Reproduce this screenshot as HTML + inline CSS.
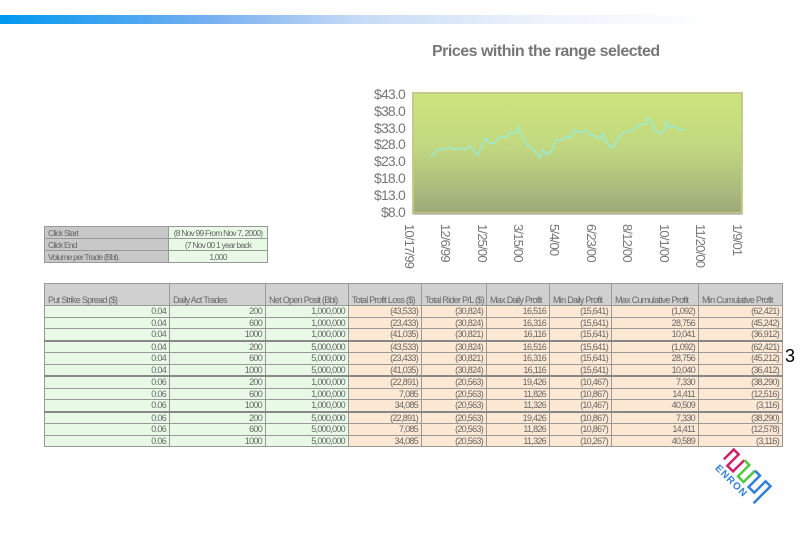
<!DOCTYPE html>
<html><head><meta charset="utf-8"><style>
body{margin:0;width:810px;height:540px;background:#fff;position:relative;overflow:hidden;font-family:"Liberation Sans",sans-serif;}
.bar{position:absolute;left:0;top:15px;width:720px;height:9px;background:linear-gradient(90deg,#0098f0,#7ab0f0 30%,#c6dcf6 50%,#eef3fb 75%,#fff);}
table{position:absolute;border-collapse:collapse;font-size:9px;color:#666;letter-spacing:-0.7px;table-layout:fixed;}
td{border:1px solid #999;padding:0 3px;height:10.5px;line-height:10px;white-space:nowrap;overflow:hidden;}
.g{background:#c8c8c8;}
.l{background:#e8fae6;text-align:right;}
.o{background:#fde8d4;text-align:right;}
.h td{background:#d0d0d0;height:21px;line-height:10px;vertical-align:bottom;text-align:left;}
.sep td{border-top:2px solid #888;}
.sm td{height:11px;}
</style></head><body>
<div class="bar"></div>
<div style="position:absolute;left:432px;top:43px;font-size:16px;font-weight:bold;color:#777;letter-spacing:-0.5px;width:240px;white-space:nowrap">Prices within the range selected</div>
<div style="position:absolute;left:360px;top:86px;width:45px;text-align:right;font-size:14px;color:#777;line-height:16.8px;letter-spacing:-0.8px">$43.0<br>$38.0<br>$33.0<br>$28.0<br>$23.0<br>$18.0<br>$13.0<br>$8.0</div>
<svg style="position:absolute;left:0;top:0" width="810" height="540">
<defs><linearGradient id="bg" x1="0" y1="0" x2="0" y2="1"><stop offset="0" stop-color="#cce47c"/><stop offset="0.45" stop-color="#c2d880"/><stop offset="1" stop-color="#9eaa7a"/></linearGradient></defs>
<rect x="413" y="93" width="329" height="120" fill="url(#bg)" stroke="#c8c88a" stroke-width="2"/>
<polyline fill="none" stroke="#8ff0e8" stroke-width="1.2" points="431,158 435,152 440,148 445,150 450,147 455,150 460,148 465,150 470,146 475,152 478,155 482,146 486,138 490,144 495,142 500,136 505,138 510,132 515,134 518,127 522,136 527,145 532,148 537,154 540,158 543,150 547,155 552,150 556,140 562,140 567,136 570,138 575,130 580,133 585,130 590,135 595,136 600,140 603,133 607,143 612,148 615,145 618,138 622,133 627,132 632,130 636,127 640,124 645,125 648,118 652,122 655,130 660,134 664,130 667,122 670,128 675,126 680,130 684,129"/>
<g stroke="#999" stroke-width="1"><line x1="413" y1="214" x2="742" y2="214"/></g>
<g font-size="13" fill="#777" font-family="Liberation Sans" letter-spacing="-0.8">
<text transform="translate(405,224) rotate(90)">10/17/99</text>
<text transform="translate(441,224) rotate(90)">12/6/99</text>
<text transform="translate(478,224) rotate(90)">1/25/00</text>
<text transform="translate(514,224) rotate(90)">3/15/00</text>
<text transform="translate(550,224) rotate(90)">5/4/00</text>
<text transform="translate(587,224) rotate(90)">6/23/00</text>
<text transform="translate(623,224) rotate(90)">8/12/00</text>
<text transform="translate(660,224) rotate(90)">10/1/00</text>
<text transform="translate(696,224) rotate(90)">11/20/00</text>
<text transform="translate(733,224) rotate(90)">1/9/01</text>
</g>
<g transform="translate(738,482) rotate(45)" fill="none" stroke-width="2.5">
<path d="M-26,-6 V-20 H-19 V-4 H-11 V-20" stroke="#d0206a"/>
<path d="M-11,-20 H-4 V-4 H4 V-20" stroke="#50c840"/>
<path d="M4,-20 H11 V-4 H19 V-20 H26 V4" stroke="#3080d8"/>
<text x="-26" y="7" fill="#3080d8" stroke="none" font-size="10" font-weight="bold" letter-spacing="1">ENRON</text>
</g>
</svg>
<div style="position:absolute;left:785px;top:346px;font-size:18px;color:#000">3</div>
<table class="sm" style="left:44px;top:226px;width:224px;font-size:8.5px;letter-spacing:-0.8px">
<tr><td class="g" style="width:117px">Click Start</td><td class="l" style="text-align:center;padding:0">(8 Nov 99 From Nov 7, 2000)</td></tr>
<tr><td class="g">Click End</td><td class="l" style="text-align:center">(7 Nov 00 1 year back</td></tr>
<tr><td class="g">Volume per Trade (Bbl).</td><td class="l" style="text-align:center">1,000</td></tr>
</table>
<table style="left:44px;top:283px;width:739px">
<tr class="h"><td style="width:118px">Put Strike Spread ($)</td><td style="width:89px">Daily Act Trades</td><td style="width:76px">Net Open Posit (Bbl)</td><td style="width:66px">Total Profit Loss ($)</td><td style="width:58px">Total Rider P/L ($)</td><td style="width:56px">Max Daily Profit</td><td style="width:55px">Min Daily Profit</td><td style="width:80px">Max Cumulative Profit</td><td>Min Cumulative Profit</td></tr>
<tr><td class="l">0.04</td><td class="l">200</td><td class="l">1,000,000</td><td class="o">(43,533)</td><td class="o">(30,824)</td><td class="o">16,516</td><td class="o">(15,641)</td><td class="o">(1,092)</td><td class="o">(62,421)</td></tr>
<tr><td class="l">0.04</td><td class="l">600</td><td class="l">1,000,000</td><td class="o">(23,433)</td><td class="o">(30,824)</td><td class="o">16,316</td><td class="o">(15,641)</td><td class="o">28,756</td><td class="o">(45,242)</td></tr>
<tr><td class="l">0.04</td><td class="l">1000</td><td class="l">1,000,000</td><td class="o">(41,035)</td><td class="o">(30,821)</td><td class="o">16,116</td><td class="o">(15,641)</td><td class="o">10,041</td><td class="o">(36,912)</td></tr>
<tr class="sep"><td class="l">0.04</td><td class="l">200</td><td class="l">5,000,000</td><td class="o">(43,533)</td><td class="o">(30,824)</td><td class="o">16,516</td><td class="o">(15,641)</td><td class="o">(1,092)</td><td class="o">(62,421)</td></tr>
<tr><td class="l">0.04</td><td class="l">600</td><td class="l">5,000,000</td><td class="o">(23,433)</td><td class="o">(30,821)</td><td class="o">16,316</td><td class="o">(15,641)</td><td class="o">28,756</td><td class="o">(45,212)</td></tr>
<tr><td class="l">0.04</td><td class="l">1000</td><td class="l">5,000,000</td><td class="o">(41,035)</td><td class="o">(30,824)</td><td class="o">16,116</td><td class="o">(15,641)</td><td class="o">10,040</td><td class="o">(36,412)</td></tr>
<tr class="sep"><td class="l">0.06</td><td class="l">200</td><td class="l">1,000,000</td><td class="o">(22,891)</td><td class="o">(20,563)</td><td class="o">19,426</td><td class="o">(10,467)</td><td class="o">7,330</td><td class="o">(38,290)</td></tr>
<tr><td class="l">0.06</td><td class="l">600</td><td class="l">1,000,000</td><td class="o">7,085</td><td class="o">(20,563)</td><td class="o">11,826</td><td class="o">(10,867)</td><td class="o">14,411</td><td class="o">(12,516)</td></tr>
<tr><td class="l">0.06</td><td class="l">1000</td><td class="l">1,000,000</td><td class="o">34,085</td><td class="o">(20,563)</td><td class="o">11,326</td><td class="o">(10,467)</td><td class="o">40,509</td><td class="o">(3,116)</td></tr>
<tr class="sep"><td class="l">0.06</td><td class="l">200</td><td class="l">5,000,000</td><td class="o">(22,891)</td><td class="o">(20,563)</td><td class="o">19,426</td><td class="o">(10,867)</td><td class="o">7,330</td><td class="o">(38,290)</td></tr>
<tr><td class="l">0.06</td><td class="l">600</td><td class="l">5,000,000</td><td class="o">7,085</td><td class="o">(20,563)</td><td class="o">11,826</td><td class="o">(10,867)</td><td class="o">14,411</td><td class="o">(12,578)</td></tr>
<tr><td class="l">0.06</td><td class="l">1000</td><td class="l">5,000,000</td><td class="o">34,085</td><td class="o">(20,563)</td><td class="o">11,326</td><td class="o">(10,267)</td><td class="o">40,589</td><td class="o">(3,116)</td></tr>
</table>
</body></html>
